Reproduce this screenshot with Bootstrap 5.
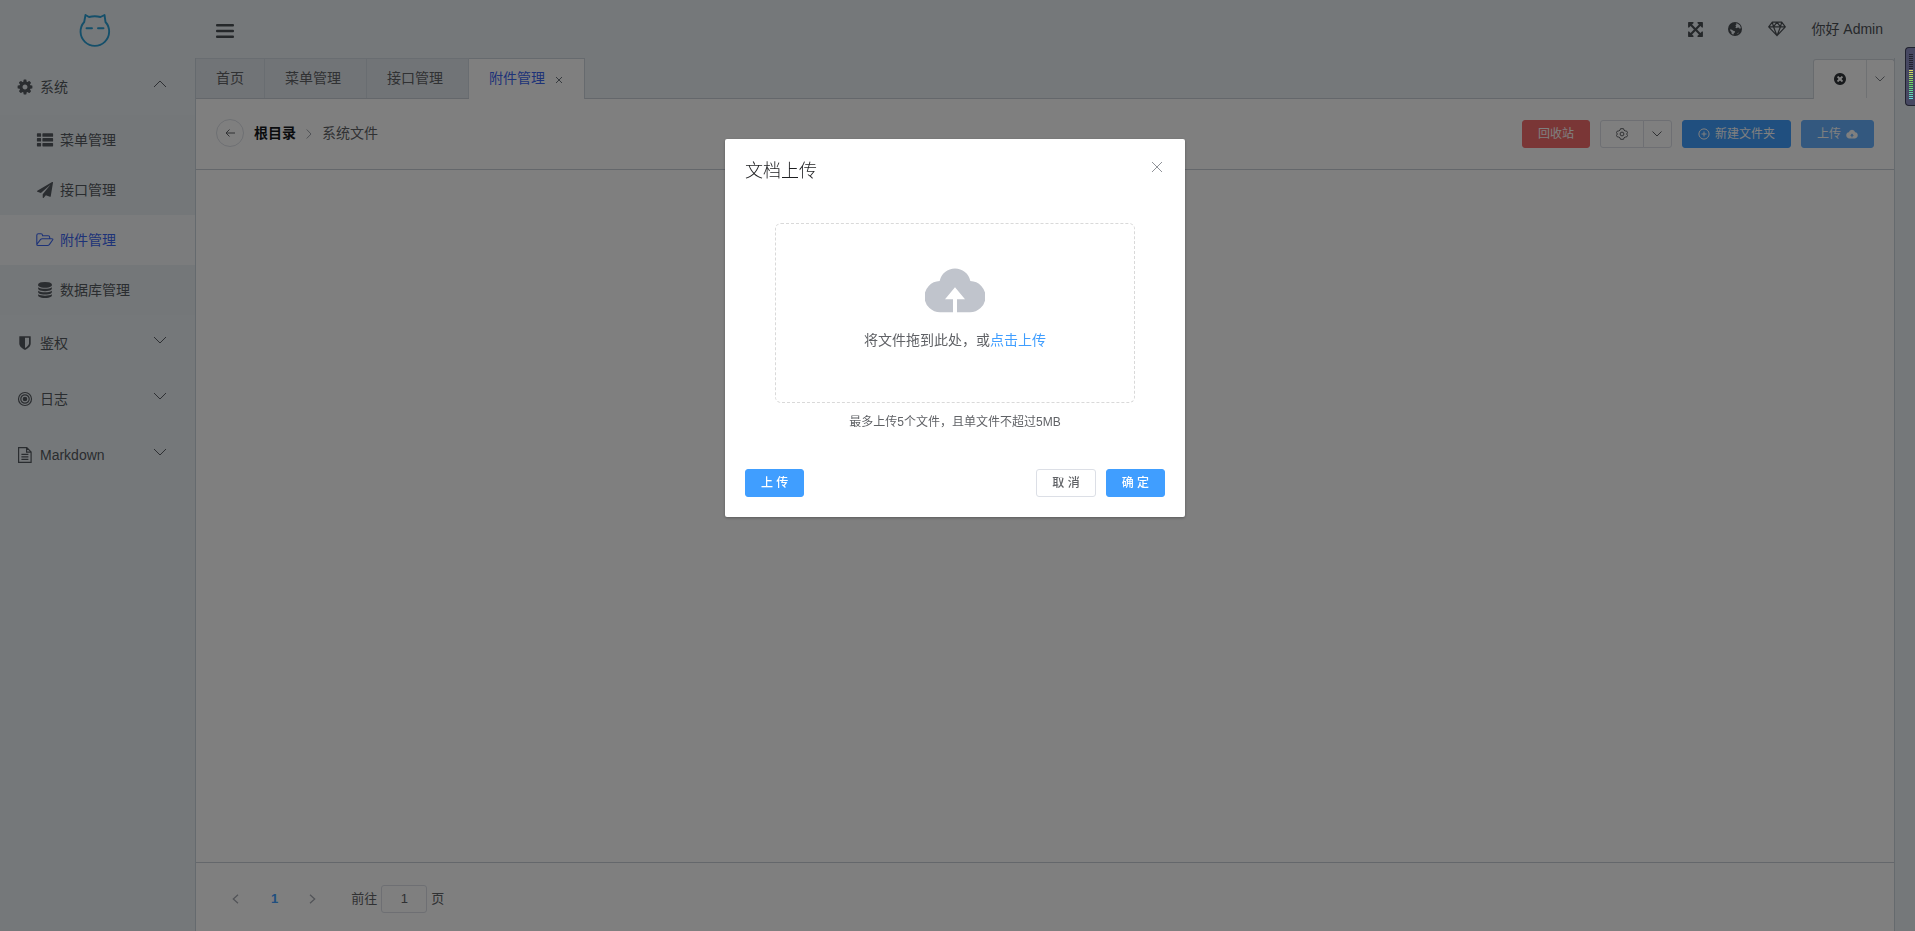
<!DOCTYPE html>
<html lang="zh-CN">
<head>
<meta charset="utf-8">
<meta name="viewport" content="width=device-width, initial-scale=1">
<title>附件管理</title>
<link href="https://cdn.jsdelivr.net/npm/bootstrap@5.3.0/dist/css/bootstrap.min.css" rel="stylesheet">
<style>
  body { font: 14px/1.5 "Liberation Sans", "Noto Sans CJK SC", sans-serif; color: #606266; background: #ebf1f5; overflow: hidden; }
  svg { display: block; flex: none; fill: currentColor; }
  .ln { fill: none; stroke: currentColor; }
  .side { width: 195px; }
  .brand { height: 59px; padding: 13px 0 0 78px; color: #2a9fd4; }
  .grp { height: 56px; padding: 0 28px 0 17px; color: #555a60; }
  .grp .caret { margin: -7px 0 0 auto; color: #5d6166; }
  .sub-item { height: 50px; padding-left: 36px; color: #555a60; }
  .sub-item svg { width: 18px; }
  .sub-item.active { background: #f7f9fb; color: #3d66f0; }
  .side .bg-sub { background: #e9eef2; }
  .gap7 { gap: 7px; }
  .gap6 { gap: 6px; }
  .gap10 { gap: 10px; }
  .top { height: 58px; padding: 0 32px 0 21px; color: #4b5055; }
  .workspace { margin-right: 20px; border: solid #cbd5dd; border-width: 0 1px 0 1px; background: #fff; min-height: 0; }
  .tabs { height: 41px; background: #ebf1f5; border-bottom: 1px solid #c9ced6; }
  .tab-item { height: 40px; padding: 0 25px 0 20px; background: #e3e9ee; border-top: 1px solid #d3dae2; border-right: 1px solid #d3dae2; }
  .tab-item:first-child { padding-right: 20px; }
  .tab-item.active { background: #fff; color: #3d66f0; border-color: #cdd4dc; height: 41px; padding-right: 20px; padding-bottom: 1px; }
  .tab-tools { width: 82px; height: 40px; margin-top: 1px; margin-right: -1px; background: #fff; border: 1px solid #d0d6dd; border-bottom: 0; border-radius: 3px 3px 0 0; }
  .tab-tools > span { height: 38px; }
  .tool { height: 71px; padding: 0 20px 1px; border-bottom: 1px solid #c9ced6; }
  .back { width: 28px; height: 28px; border: 1px solid #dcdfe6; margin-right: 10px; }
  .root { color: #16191d; }
  .btn-el { --bs-btn-font-size: 12px; --bs-btn-padding-y: 0; --bs-btn-padding-x: 15px; --bs-btn-border-radius: 3px; height: 28px; line-height: 26px; }
  .btn-blue { --bs-btn-color: #fff; --bs-btn-bg: #409eff; --bs-btn-border-color: #409eff; }
  .btn-sky { --bs-btn-color: #fff; --bs-btn-bg: #66b1ff; --bs-btn-border-color: #66b1ff; }
  .btn-red { --bs-btn-color: #fff; --bs-btn-bg: #f56c6c; --bs-btn-border-color: #f56c6c; }
  .btn-plain { --bs-btn-color: #606266; --bs-btn-bg: #fff; --bs-btn-border-color: #dcdfe6; }
  .foot { height: 69px; padding: 3px 0 0 36px; border-top: 1px solid #c9ced6; font-size: 13px; }
  .jump { width: 46px; height: 28px; border: 1px solid #dcdfe6; border-radius: 3px; margin: 0 4px; }
  .dialog { width: 460px; max-width: none; margin: 139px 725px 0; }
  .dialog .modal-content { height: 378px; border: 0; border-radius: 2px; box-shadow: 0 1px 3px rgba(0,0,0,.3); padding: 20px; color: #606266; }
  .dialog h1 { font-size: 18px; line-height: 24px; color: #1d1e20; }
  .drop { width: 360px; height: 180px; border: 1px dashed #d9d9d9; border-radius: 6px; margin: 40px auto 0; padding-top: 44px; }
  .hint { font-size: 12px; line-height: 18px; margin-top: 10px; }
  .meter { right: 0; top: 47px; width: 10px; height: 59px; z-index: 1100; background: #474862; border: 1px solid #20222f; border-right: 0; border-radius: 4px 0 0 4px; padding: 6px 2px 5px 3px; }
  .meter i { height: 1px; margin-bottom: 1px; }
</style>
</head>
<body class="vh-100">
<div class="d-flex h-100">
  <nav class="side flex-shrink-0">
    <div class="brand"><svg class="ln" width="33" height="34" viewBox="0 0 33 34" stroke-width="1.900" stroke-linejoin="round" stroke-linecap="round"><path d="M7.500 2 11 4Q16.800 2.600 22.500 4L26.500 2 27.500 9A14.300 14.300 0 1 1 6.200 9ZM8.500 15.300h5.500M20 15.300h5.500"/></svg></div>
    <div class="grp d-flex align-items-center gap7"><svg width="16" height="16" viewBox="64 64 1664 1664"><path d="M1152 896q0-106-75-181t-181-75-181 75-75 181 75 181 181 75 181-75 75-181zm512-109v222q0 12-8 23t-20 13l-185 28q-19 54-39 91 35 50 107 138 10 12 10 25t-9 23q-27 37-99 108t-94 71q-12 0-26-9l-138-108q-44 23-91 38-16 136-29 186-7 28-36 28h-222q-14 0-24.5-8.5t-11.5-21.5l-28-184q-49-16-90-37l-141 107q-10 9-25 9-14 0-25-11-126-114-165-168-7-10-7-23 0-12 8-23 15-21 51-66.5t54-70.5q-27-50-41-99l-183-27q-13-2-21-12.5t-8-23.5v-222q0-12 8-23t19-13l186-28q14-46 39-92-40-57-107-138-10-12-10-24 0-10 9-23 26-36 98.5-107.5t94.5-71.5q13 0 26 10l138 107q44-23 91-38 16-136 29-186 7-28 36-28h222q14 0 24.5 8.5t11.5 21.5l28 184q49 16 90 37l142-107q9-9 24-9 13 0 25 10 129 119 165 170 7 8 7 22 0 12-8 23-15 21-51 66.5t-54 70.5q26 50 41 98l183 28q13 2 21 12.5t8 23.5z"/></svg>系统<svg class="caret ln" width="14" height="8" viewBox="0 0 14 8"><path d="M1 7 7 1l6 6"/></svg></div>
    <div class="bg-sub">
      <div class="sub-item d-flex align-items-center gap6"><svg height="14" viewBox="0 0 18 14"><path d="M1.500.300h3q.6 0 .6.6v2.300q0 .6-.6.6h-3q-.6 0-.6-.6V.900q0-.6.6-.6zM7 .300h9.500q.6 0 .6.6v2.300q0 .6-.6.6H7q-.6 0-.6-.6V.900q0-.6.6-.6zM1.500 5.100h3q.6 0 .6.6v2.300q0 .6-.6.6h-3q-.6 0-.6-.6V5.700q0-.6.6-.6zM7 5.100h9.500q.6 0 .6.6v2.300q0 .6-.6.6H7q-.6 0-.6-.6V5.700q0-.6.6-.6zM1.500 9.900h3q.6 0 .6.6v2.300q0 .6-.6.6h-3q-.6 0-.6-.6v-2.300q0-.6.6-.6zM7 9.900h9.500q.6 0 .6.6v2.300q0 .6-.6.6H7q-.6 0-.6-.6v-2.300q0-.6.6-.6z"/></svg>菜单管理</div>
      <div class="sub-item d-flex align-items-center gap6"><svg height="16" viewBox="0 0 1792 1792"><path d="M1764 11q33 24 27 64l-256 1536q-5 29-32 45-14 8-31 8-11 0-24-5l-453-185-242 295q-18 23-49 23-13 0-22-4-19-7-30.500-23.500t-11.500-36.500v-349l864-1059-1069 925-395-162q-37-14-40-55-2-40 32-59l1664-960q15-9 32-9 20 0 36 11z"/></svg>接口管理</div>
      <div class="sub-item active d-flex align-items-center gap6"><svg class="ln" height="14" viewBox="0 0 18 14" stroke-width="1.100" stroke-linejoin="round"><path d="M.8 11.500V2.300Q.8.800 2.300.800H5Q6.500.800 6.500 2.300v.5h5.700q1.500 0 1.500 1.500v1.400M.8 11.500 4.400 6.600q.7-.9 1.800-.9h9.500q1.800 0 .9 1.300l-3.300 4.600q-.7.900-1.800.9H2.100Q.8 12.500.8 11.500z"/></svg>附件管理</div>
      <div class="sub-item d-flex align-items-center gap6"><svg height="16" viewBox="0 0 1792 1792"><path d="M896 768q237 0 443-43t325-127v170q0 69-103 128t-280 93.500-385 34.500-385-34.500-280-93.500-103-128v-170q119 84 325 127t443 43zm0 768q237 0 443-43t325-127v170q0 69-103 128t-280 93.500-385 34.500-385-34.500-280-93.500-103-128v-170q119 84 325 127t443 43zm0-384q237 0 443-43t325-127v170q0 69-103 128t-280 93.500-385 34.500-385-34.500-280-93.500-103-128v-170q119 84 325 127t443 43zm0-1152q208 0 385 34.500t280 93.500 103 128v128q0 69-103 128t-280 93.500-385 34.500-385-34.500-280-93.500-103-128v-128q0-69 103-128t280-93.500 385-34.500z"/></svg>数据库管理</div>
    </div>
    <div class="grp d-flex align-items-center gap7"><svg width="16" height="16" viewBox="0 0 1792 1792"><path d="M1344 960v-640h-448v1137q119-63 213-137 235-184 235-360zm192-768v768q0 86-33.500 170.500t-83 150-118 127.500-126.500 103-121 77.500-89.500 49.500-42.500 20q-12 6-26 6t-26-6q-16-7-42.500-20t-89.500-49.500-121-77.500-126.500-103-118-127.500-83-150-33.500-170.500v-768q0-26 19-45t45-19h1152q26 0 45 19t19 45z"/></svg>鉴权<svg class="caret ln" width="14" height="8" viewBox="0 0 14 8"><path d="M1 1l6 6 6-6"/></svg></div>
    <div class="grp d-flex align-items-center gap7"><svg width="16" height="16" viewBox="0 0 16 16"><circle cx="8" cy="8" r="2.300"/><g class="ln" stroke-width="1.200"><circle cx="8" cy="8" r="4.200"/><circle cx="8" cy="8" r="6.500"/></g></svg>日志<svg class="caret ln" width="14" height="8" viewBox="0 0 14 8"><path d="M1 1l6 6 6-6"/></svg></div>
    <div class="grp d-flex align-items-center gap7"><svg class="ln" width="16" height="16" viewBox="0 0 16 16" stroke-width="1.200"><path d="M1.600.7h8.200l4.300 4.200v10.400H1.600zM9.600.9v4.300h4.300M4.400 7.300h7M4.400 9.800h7M4.400 12.300h7"/></svg>Markdown<svg class="caret ln" width="14" height="8" viewBox="0 0 14 8"><path d="M1 1l6 6 6-6"/></svg></div>
  </nav>

  <div class="d-flex flex-column flex-grow-1">
    <header class="top d-flex align-items-center">
      <svg class="me-auto mt-1" width="18" height="14" viewBox="0 0 18 14"><rect width="18" height="2.600" rx="1"/><rect y="5.700" width="18" height="2.600" rx="1"/><rect y="11.400" width="18" height="2.600" rx="1"/></svg>
      <svg width="15" height="15" viewBox="120 120 1552 1552"><path d="M1411 541l-355 355 355 355 144-144q29-31 70-14 39 17 39 59v448q0 26-19 45t-45 19h-448q-42 0-59-40-17-39 14-69l144-144-355-355-355 355 144 144q31 30 14 69-17 40-59 40h-448q-26 0-45-19t-19-45v-448q0-42 40-59 39-17 69 14l144 144 355-355-355-355-144 144q-19 19-45 19-12 0-24-5-40-17-40-59v-448q0-26 19-45t45-19h448q42 0 59 40 17 39-14 69l-144 144 355 355 355-355-144-144q-31-30-14-69 17-40 59-40h448q26 0 45 19t19 45v448q0 42-39 59-13 5-25 5-26 0-45-19z"/></svg>
      <svg class="ms-4" width="16" height="16" viewBox="0 0 16 16"><path fill-rule="evenodd" d="M8 1a7 7 0 1 0 0 14A7 7 0 0 0 8 1zM8.700 2.200 10.800 2.700 12.800 4.200 13.800 6.400 13 8.200 12.200 6.800 10.800 6.500 9.700 7.300 8.300 6.500 9.200 5.300 8.300 4.300 9.500 3.600zM3.200 8.300 5 8.700 6.200 9.700 8 10.200 7.800 11.500 6.700 12.500 6.300 13.700 4.600 12.800 4.500 10.900 3.300 9.800zM9.800 12.900 11.800 11.300 11.300 12.600z"/></svg>
      <svg class="ln" style="margin-left:25px" width="18" height="16" viewBox="0 0 18 16" stroke-width="1.200" stroke-linejoin="round"><path d="M4.300 1.200h9.400l3.600 4.600L9 14.700.7 5.800zM.7 5.800h16.600M4.300 1.200l1.200 4.600L9 14.700l3.500-8.900 1.200-4.600M5.500 5.800 9 1.200l3.500 4.600"/></svg>
      <span style="margin-left:25px">你好 Admin</span>
    </header>
    <main class="workspace d-flex flex-column flex-grow-1">
      <div class="tabs d-flex flex-shrink-0">
        <div class="tab-item d-flex align-items-center">首页</div>
        <div class="tab-item d-flex align-items-center">菜单管理</div>
        <div class="tab-item d-flex align-items-center">接口管理</div>
        <div class="tab-item active d-flex align-items-center">附件管理<svg class="ln text-secondary" style="margin:2px 1px 0 10px" width="8" height="8" viewBox="0 0 8 8"><path d="M1 1l6 6M7 1 1 7"/></svg></div>
        <div class="tab-tools d-flex ms-auto">
          <span class="d-flex align-items-center justify-content-center border-end flex-grow-1"><svg width="12" height="12" viewBox="128 128 1536 1536" color="#303438"><path d="M1277 1122q0-26-19-45l-181-181 181-181q19-19 19-45 0-27-19-46l-90-90q-19-19-46-19-26 0-45 19l-181 181-181-181q-19-19-45-19-27 0-46 19l-90 90q-19 19-19 46 0 26 19 45l181 181-181 181q-19 19-19 45 0 27 19 46l90 90q19 19 46 19 26 0 45-19l181-181 181 181q19 19 45 19 27 0 46-19l90-90q19-19 19-46zm387-226q0 209-103 385.500t-279.500 279.500-385.500 103-385.500-103-279.500-279.500-103-385.500 103-385.500 279.500-279.500 385.500-103 385.500 103 279.500 279.500 103 385.500z"/></svg></span>
          <span class="d-flex align-items-center justify-content-center" style="width:27px"><svg class="ln" style="margin-right:1px" width="10" height="6" viewBox="0 0 10 6" color="#7d8187"><path d="M.5.500 5 5 9.500.500"/></svg></span>
        </div>
      </div>
      <div class="tool d-flex align-items-center flex-shrink-0">
        <span class="back rounded-circle d-flex align-items-center justify-content-center" style="margin-top:-1px"><svg class="ln" width="10" height="8" viewBox="0 0 10 8"><path d="M10 4H1M4.500.500 1 4l3.500 3.500"/></svg></span>
        <strong class="root">根目录</strong>
        <svg class="ln" style="margin:0 10px" width="6" height="10" viewBox="0 0 6 10" color="#a0a4ab"><path d="M.7.500 5 5 .7 9.500"/></svg>
        <span class="me-auto">系统文件</span>
        <div class="d-flex gap10">
          <button class="btn btn-el btn-red">回收站</button>
          <div class="btn-group">
            <button class="btn btn-el btn-plain d-flex align-items-center"><svg class="ln" width="12" height="12" viewBox="0 0 12 12"><path d="M4.500.700h3l.5 1.500 1.600.8 1.200.2.700 1.300-.8 1.500.8 1.500-.7 1.300-1.200.2-1.600.8-.5 1.500h-3L4 9.800 2.400 9 1.200 8.800.5 7.500 1.300 6 .5 4.500l.7-1.300L2.400 3 4 2.200z"/><circle cx="6" cy="6" r="1.900"/></svg></button>
            <button class="btn btn-el btn-plain d-flex align-items-center px-2" style="width:29px"><svg class="ln" width="10" height="6" viewBox="0 0 10 6"><path d="M.5.500 5 5 9.500.500"/></svg></button>
          </div>
          <button class="btn btn-el btn-blue d-flex align-items-center" style="gap:5px"><svg class="ln" width="12" height="12" viewBox="0 0 12 12"><circle cx="6" cy="6" r="5.100"/><path d="M6 3.500v5M3.500 6h5"/></svg>新建文件夹</button>
          <button class="btn btn-el btn-sky d-flex align-items-center" style="gap:5px">上传<svg width="12" height="12" viewBox="0 0 180 180"><path fill-rule="evenodd" d="M45 156a47 47 0 0 1-2-93 48 48 0 0 1 94 0 47 47 0 0 1-2 93zM90 81 62 117h20v22h16v-22h20z"/></svg></button>
        </div>
      </div>
      <section class="flex-grow-1"></section>
      <footer class="foot d-flex align-items-center flex-shrink-0">
        <svg class="ln" width="7" height="10" viewBox="0 0 7 10" stroke-width="1.300" color="#a4a8b0"><path d="M6 .700 1.300 5 6 9.300"/></svg>
        <strong style="margin:0 31px 0 32px;color:#409eff">1</strong>
        <svg class="ln" width="7" height="10" viewBox="0 0 7 10" stroke-width="1.300" color="#a4a8b0"><path d="M1 .700 5.700 5 1 9.300"/></svg>
        <span style="margin-left:35px">前往</span>
        <span class="jump d-flex align-items-center justify-content-center">1</span>页
      </footer>
    </main>
  </div>
</div>

<div class="modal-backdrop show"></div>
<div class="modal d-block" tabindex="-1" role="dialog">
  <div class="modal-dialog dialog">
    <div class="modal-content">
      <div class="d-flex justify-content-between">
        <h1 class="mb-0 fw-light">文档上传</h1>
        <svg class="ln" style="margin:2px 2px 0 0" width="12" height="12" viewBox="0 0 12 12" color="#909399"><path d="M1 1l10 10M11 1 1 11"/></svg>
      </div>
      <div class="drop text-center">
        <svg class="mx-auto" width="60" height="45" viewBox="0 0 180 135" color="#c0c4cc"><path fill-rule="evenodd" d="M47 133A47 47 0 0 1 44 39a47 47 0 0 1 92 0 47 47 0 0 1-3 94H96V94h24L90 58 60 94h24v39z"/></svg>
        <div style="margin-top:17px">将文件拖到此处，或<span style="color:#409eff">点击上传</span></div>
      </div>
      <div class="hint text-center">最多上传5个文件，且单文件不超过5MB</div>
      <div class="d-flex gap10 mt-auto">
        <button class="btn btn-el btn-blue fw-medium me-auto">上 传</button>
        <button class="btn btn-el btn-plain fw-medium">取 消</button>
        <button class="btn btn-el btn-blue fw-medium">确 定</button>
      </div>
    </div>
  </div>
</div>
<div class="meter position-fixed" id="meter"></div>
<script src="https://cdn.jsdelivr.net/npm/bootstrap@5.3.0/dist/js/bootstrap.bundle.min.js"></script>
<script>
  // level bars: dim segments on top, then yellow fading through green to cyan
  const meter = document.getElementById('meter');
  for (let n = 0; n < 23; n++) {
    const bar = document.createElement('i');
    bar.className = 'd-block';
    bar.style.background = n < 8 ? '#22232f' : `hsl(${60 + (n - 8) * 8.500}, 62%, 62%)`;
    meter.append(bar);
  }
</script>
</body>
</html>
